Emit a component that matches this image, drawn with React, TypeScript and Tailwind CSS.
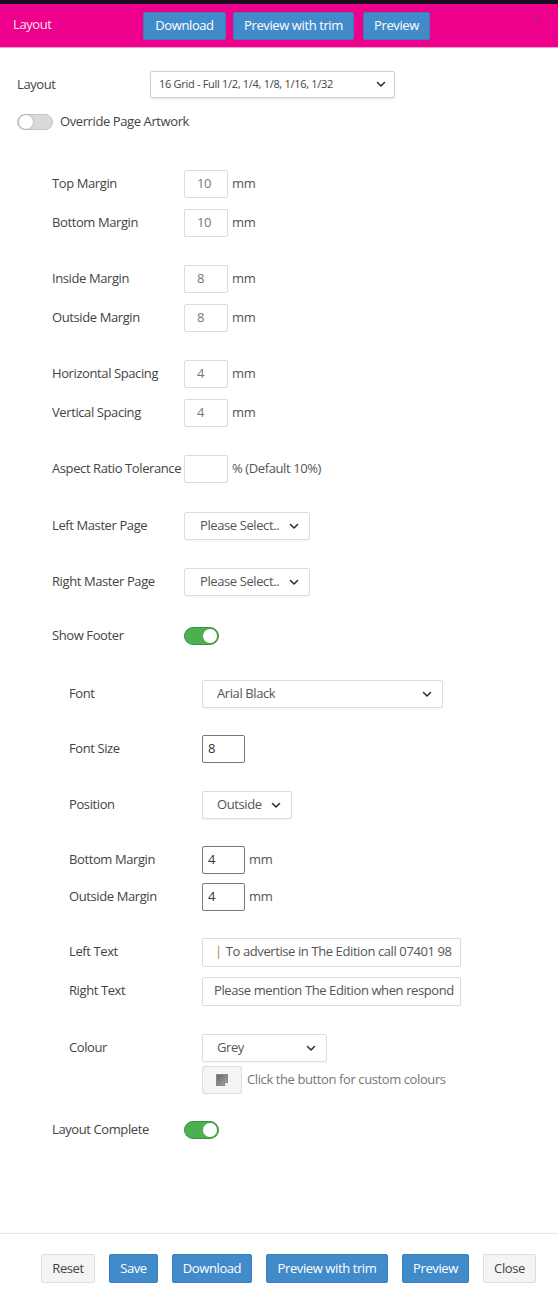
import React from "react";

const Chevron = () => (
  <svg width="10" height="7" viewBox="0 0 10 7" className="shrink-0">
    <path d="M1.5 1.5 L5 5 L8.5 1.5" fill="none" stroke="#333" strokeWidth="1.6" strokeLinecap="round" strokeLinejoin="round" />
  </svg>
);

const Select = ({ text, w, pl = "pl-[15px]" }: { text: string; w: string; pl?: string }) => (
  <div className={`flex items-center justify-between h-[28px] ${w} ${pl} pr-[10px] border border-[#dcdcdc] rounded-[2px] bg-white text-[13px] text-[#555] shadow-[0_1px_1px_rgba(0,0,0,0.04)]`}>
    <span className="whitespace-nowrap overflow-hidden">{text}</span>
    <Chevron />
  </div>
);

const NumInput = ({ v, dark = false }: { v: string; dark?: boolean }) =>
  dark ? (
    <div className="flex items-center h-[28px] w-[43px] pl-[5px] border border-[#767676] rounded-[2px] bg-white text-[13px] text-[#333]">{v}</div>
  ) : (
    <div className="flex items-center h-[28px] w-[44px] pl-[12px] border border-[#dcdcdc] rounded-[2px] bg-white text-[13px] text-[#777]">{v}</div>
  );

const Row = ({ label, mt, children, lw = "w-[132px]" }: { label: string; mt: string; children?: React.ReactNode; lw?: string }) => (
  <div className={`flex items-center h-[28px] ${mt}`}>
    <div className={`${lw} shrink-0 text-[13px] text-[#444] whitespace-nowrap`}>{label}</div>
    {children}
  </div>
);

const Mm = ({ t = "mm" }: { t?: string }) => <span className="ml-[4px] text-[13px] text-[#555] whitespace-nowrap">{t}</span>;

const GreenToggle = () => (
  <div className="relative w-[35px] h-[18px] rounded-full bg-[#4caf50] border border-[#3e9142]">
    <div className="absolute right-[1px] top-[1px] w-[14px] h-[14px] rounded-full bg-white" />
  </div>
);

const BlueBtn = ({ children, w, h = "h-[28px]" }: { children: React.ReactNode; w: string; h?: string }) => (
  <div className={`flex items-center justify-center ${h} ${w} bg-[#428bca] text-white text-[13px] rounded-[2px] border border-[#3a7fbd]`}>{children}</div>
);

const GrayBtn = ({ children, w }: { children: React.ReactNode; w: string }) => (
  <div className={`flex items-center justify-center h-[29px] ${w} bg-[#f4f4f4] text-[#444] text-[13px] rounded-[2px] border border-[#dedede]`}>{children}</div>
);

export default function App() {
  return (
    <div className="w-[558px] h-[1299px] bg-white flex flex-col overflow-hidden tracking-[-0.4px]" style={{ fontFamily: '"Open Sans", "Noto Sans", sans-serif' }}>
      <div className="h-[4px] bg-[#1b0d1f]" />
      <div className="relative h-[44px] bg-[#ec008c] border-b border-[#f49ccc] flex items-center">
        <span className="absolute left-[13px] top-[11px] text-[13px] text-[#fde2f1]">Layout</span>
        <div className="flex ml-[143px] mt-[1px]">
          <BlueBtn w="w-[83px]">Download</BlueBtn>
          <div className="ml-[7px]"><BlueBtn w="w-[121px]">Preview with trim</BlueBtn></div>
          <div className="ml-[9px]"><BlueBtn w="w-[67px]">Preview</BlueBtn></div>
        </div>
        <span className="absolute right-[17px] top-[3px] text-[16px] text-[#c2187a]">×</span>
      </div>

      <div className="px-[17px] flex flex-col">
        <div className="flex items-center h-[27px] mt-[23px]">
          <div className="w-[133px] text-[13px] text-[#444]">Layout</div>
          <div className="flex items-center justify-between h-[27px] w-[245px] pl-[8px] pr-[8px] border border-[#cfcfcf] rounded-[2px] text-[11px] tracking-[-0.3px] text-[#444] shadow-[0_1px_2px_rgba(0,0,0,0.1)]">
            <span>16 Grid - Full 1/2, 1/4, 1/8, 1/16, 1/32</span>
            <Chevron />
          </div>
        </div>
        <div className="flex items-center h-[28px] mt-[10px]">
          <div className="relative w-[36px] h-[16px] rounded-full bg-[#d9d9d9] border border-[#c4c4c4]">
            <div className="absolute left-[1px] top-[0px] w-[14px] h-[14px] rounded-full bg-white shadow-[0_0_2px_rgba(0,0,0,0.3)]" />
          </div>
          <span className="ml-[7px] text-[13px] text-[#444]">Override Page Artwork</span>
        </div>

        <div className="pl-[35px] flex flex-col">
          <Row label="Top Margin" mt="mt-[34px]"><NumInput v="10" /><Mm /></Row>
          <Row label="Bottom Margin" mt="mt-[11px]"><NumInput v="10" /><Mm /></Row>
          <Row label="Inside Margin" mt="mt-[28px]"><NumInput v="8" /><Mm /></Row>
          <Row label="Outside Margin" mt="mt-[11px]"><NumInput v="8" /><Mm /></Row>
          <Row label="Horizontal Spacing" mt="mt-[28px]"><NumInput v="4" /><Mm /></Row>
          <Row label="Vertical Spacing" mt="mt-[11px]"><NumInput v="4" /><Mm /></Row>
          <Row label="Aspect Ratio Tolerance" mt="mt-[28px]"><NumInput v="" /><Mm t="% (Default 10%)" /></Row>
          <Row label="Left Master Page" mt="mt-[29px]"><Select text="Please Select.." w="w-[126px]" /></Row>
          <Row label="Right Master Page" mt="mt-[28px]"><Select text="Please Select.." w="w-[126px]" /></Row>
          <Row label="Show Footer" mt="mt-[26px]"><GreenToggle /></Row>

          <div className="pl-[17px] flex flex-col">
            <Row label="Font" mt="mt-[30px]" lw="w-[133px]"><Select text="Arial Black" w="w-[241px]" pl="pl-[14px]" /></Row>
            <Row label="Font Size" mt="mt-[27px]" lw="w-[133px]"><NumInput v="8" dark /></Row>
            <Row label="Position" mt="mt-[28px]" lw="w-[133px]"><Select text="Outside" w="w-[90px]" pl="pl-[14px]" /></Row>
            <Row label="Bottom Margin" mt="mt-[27px]" lw="w-[133px]"><NumInput v="4" dark /><Mm /></Row>
            <Row label="Outside Margin" mt="mt-[9px]" lw="w-[133px]"><NumInput v="4" dark /><Mm /></Row>
            <Row label="Left Text" mt="mt-[27px]" lw="w-[133px]">
              <div className="flex items-center h-[29px] w-[259px] pl-[12px] border border-[#dcdcdc] rounded-[2px] text-[13px] text-[#555] whitespace-nowrap overflow-hidden">
                <span className="text-[#b07b3e] mr-[4px]">|</span>To advertise in The Edition call 07401 98
              </div>
            </Row>
            <Row label="Right Text" mt="mt-[11px]" lw="w-[133px]">
              <div className="flex items-center h-[29px] w-[259px] pl-[11px] border border-[#dcdcdc] rounded-[2px] text-[13px] text-[#555] whitespace-nowrap overflow-hidden">
                Please mention The Edition when respond
              </div>
            </Row>
            <Row label="Colour" mt="mt-[29px]" lw="w-[133px]"><Select text="Grey" w="w-[125px]" pl="pl-[14px]" /></Row>
            <div className="flex items-center h-[28px] mt-[4px] pl-[133px]">
              <div className="flex items-center justify-center w-[40px] h-[28px] bg-[#f5f5f5] border border-[#dedede] rounded-[2px]">
                <div className="relative w-[12px] h-[12px] border border-[#8a8a8a] bg-gradient-to-br from-[#666] to-[#aaa]">
                  <div className="absolute right-[-1px] bottom-[-1px] w-[4px] h-[4px] bg-[#eee] border-l border-t border-[#8a8a8a]" />
                </div>
              </div>
              <span className="ml-[5px] text-[13px] text-[#777] whitespace-nowrap">Click the button for custom colours</span>
            </div>
          </div>

          <Row label="Layout Complete" mt="mt-[22px]"><GreenToggle /></Row>
        </div>
      </div>

      <div className="mt-auto border-t border-[#e5e5e5] h-[66px] flex items-start pt-[20px] pl-[41px] gap-[14px]">
        <GrayBtn w="w-[54px]">Reset</GrayBtn>
        <BlueBtn w="w-[49px]" h="h-[29px]">Save</BlueBtn>
        <BlueBtn w="w-[80px]" h="h-[29px]">Download</BlueBtn>
        <BlueBtn w="w-[122px]" h="h-[29px]">Preview with trim</BlueBtn>
        <BlueBtn w="w-[67px]" h="h-[29px]">Preview</BlueBtn>
        <GrayBtn w="w-[53px]">Close</GrayBtn>
      </div>
    </div>
  );
}
